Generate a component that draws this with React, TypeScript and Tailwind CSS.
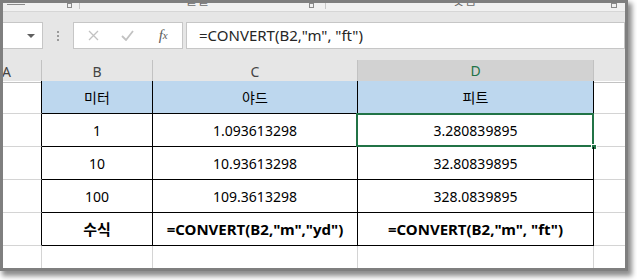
import React from 'react';

const font = { fontFamily: '"Noto Sans", "Noto Sans CJK KR", sans-serif' };

type Row = { b: string; c: string; d: string; bold?: boolean; head?: boolean };

const rows: Row[] = [
  { b: '미터', c: '야드', d: '피트', head: true },
  { b: '1', c: '1.093613298', d: '3.280839895' },
  { b: '10', c: '10.93613298', d: '32.80839895' },
  { b: '100', c: '109.3613298', d: '328.0839895' },
  { b: '수식', c: '=CONVERT(B2,"m","yd")', d: '=CONVERT(B2,"m", "ft")', bold: true },
];

const cols = 'grid grid-cols-[39px_111px_205px_236px_1fr]';

export default function App() {
  return (
    <div className="w-[637px] h-[280px] bg-white overflow-hidden" style={font}>
      <div className="w-[628px] h-[271px] border-[3px] border-[#7f7f7f] shadow-[3px_4px_5px_1px_rgba(0,0,0,0.45)] flex flex-col overflow-hidden bg-white">
        {/* ribbon leftovers */}
        <div className="h-[9px] shrink-0 bg-[#f1f1f1] border-b border-[#d6d6d6] flex items-start overflow-hidden text-[#6b6b6b]">
          <span className="ml-[4px] w-[18px] h-[1px] mt-[1px] bg-[#8a8a8a]" />
          <span className="ml-[42px] w-[5px] h-[5px] border border-[#8a8a8a]" />
          <span className="ml-[7px] w-[1px] h-[6px] bg-[#c8c8c8]" />
          <span className="ml-[106px] -mt-[9px] text-[12px] leading-[14px] tracking-[1px]">글꼴</span>
          <span className="ml-[99px] w-[5px] h-[5px] border border-[#8a8a8a]" />
          <span className="ml-[11px] w-[1px] h-[6px] bg-[#c8c8c8]" />
          <span className="ml-[127px] -mt-[9px] text-[12px] leading-[14px] tracking-[1px]">맞춤</span>
          <span className="ml-[134px] w-[6px] h-[5px] border border-[#8a8a8a]" />
        </div>

        {/* formula bar */}
        <div className="h-[48px] shrink-0 bg-[#e6e6e6] pt-[10px] flex items-start">
          <div className="w-[40px] h-[27px] bg-white border-y border-r border-[#c6c6c6] flex items-center justify-end pr-[7px]">
            <span className="w-0 h-0 border-l-[4px] border-r-[4px] border-t-[4px] border-l-transparent border-r-transparent border-t-[#5f5f5f]" />
          </div>
          <div className="ml-[14px] pt-[9px] flex flex-col gap-[2px]">
            <span className="w-[2px] h-[2px] bg-[#9a9a9a]" />
            <span className="w-[2px] h-[2px] bg-[#9a9a9a]" />
            <span className="w-[2px] h-[2px] bg-[#9a9a9a]" />
          </div>
          <div className="ml-[14px] w-[110px] h-[27px] bg-white border border-[#c6c6c6] flex items-center pl-[3px]">
            <span className="w-[34px] flex justify-center">
              <svg width="11" height="11" viewBox="0 0 11 11" stroke="#c2c2c2" strokeWidth="1.3">
                <path d="M1 1 L10 10 M10 1 L1 10" />
              </svg>
            </span>
            <span className="w-[34px] flex justify-center">
              <svg width="13" height="11" viewBox="0 0 13 11" fill="none" stroke="#c2c2c2" strokeWidth="1.8">
                <path d="M1 6 L5 10 L12 1" />
              </svg>
            </span>
            <span className="w-[38px] flex justify-center text-[#5c5c5c] italic" style={{ fontFamily: '"Liberation Serif", serif' }}>
              <span className="text-[15px]">f</span>
              <span className="text-[11px] mt-[3px]">x</span>
            </span>
          </div>
          <div className="ml-[3px] flex-1 h-[27px] bg-white border border-[#c6c6c6] flex items-center pl-[12px] text-[15px] text-[#262626]">
            =CONVERT(B2,"m", "ft")
          </div>
        </div>

        {/* column headers */}
        <div className={`${cols} h-[21px] shrink-0 bg-[#e6e6e6] text-[14px] text-[#444]`}>
          <div className="border-r border-b border-r-[#c2c2c2] border-b-[#c2c2c2] flex items-center -ml-[1px]">A</div>
          <div className="border-r border-b border-r-[#c2c2c2] border-b-black flex items-center justify-center">B</div>
          <div className="border-r border-b border-r-[#c2c2c2] border-b-black flex items-center justify-center">C</div>
          <div className="bg-[#d2d2d2] border-r border-b-2 border-r-[#c2c2c2] border-b-[#217346] text-[#217346] flex items-center justify-center">D</div>
          <div className="border-b border-[#c2c2c2]" />
        </div>

        {/* sheet rows */}
        {rows.map((r, i) => (
          <div key={i} className={`${cols} h-[33px] shrink-0 text-[14px] text-black`}>
            <div className="border-r border-b border-r-black border-b-[#d4d4d4]" />
            {[r.b, r.c, r.d].map((v, j) => (
              <div
                key={j}
                className={`relative border-r border-b border-black flex items-center justify-center ${r.head ? 'bg-[#bdd7ee]' : ''} ${r.bold ? 'font-bold text-[15px]' : ''}`}
              >
                {v}
                {i === 1 && j === 2 && (
                  <>
                    <span className="absolute -left-[2px] -top-[1px] -right-[1px] -bottom-[1px] border-2 border-[#217346]" />
                    <span className="absolute -right-[4px] -bottom-[4px] w-[6px] h-[6px] bg-[#217346] border border-white" />
                  </>
                )}
              </div>
            ))}
            <div className="border-b border-[#d4d4d4]" />
          </div>
        ))}
        <div className={`${cols} flex-1`}>
          <div className="border-r border-[#d4d4d4]" />
          <div className="border-r border-[#d4d4d4]" />
          <div className="border-r border-[#d4d4d4]" />
          <div className="border-r border-[#d4d4d4]" />
          <div />
        </div>
      </div>
    </div>
  );
}
